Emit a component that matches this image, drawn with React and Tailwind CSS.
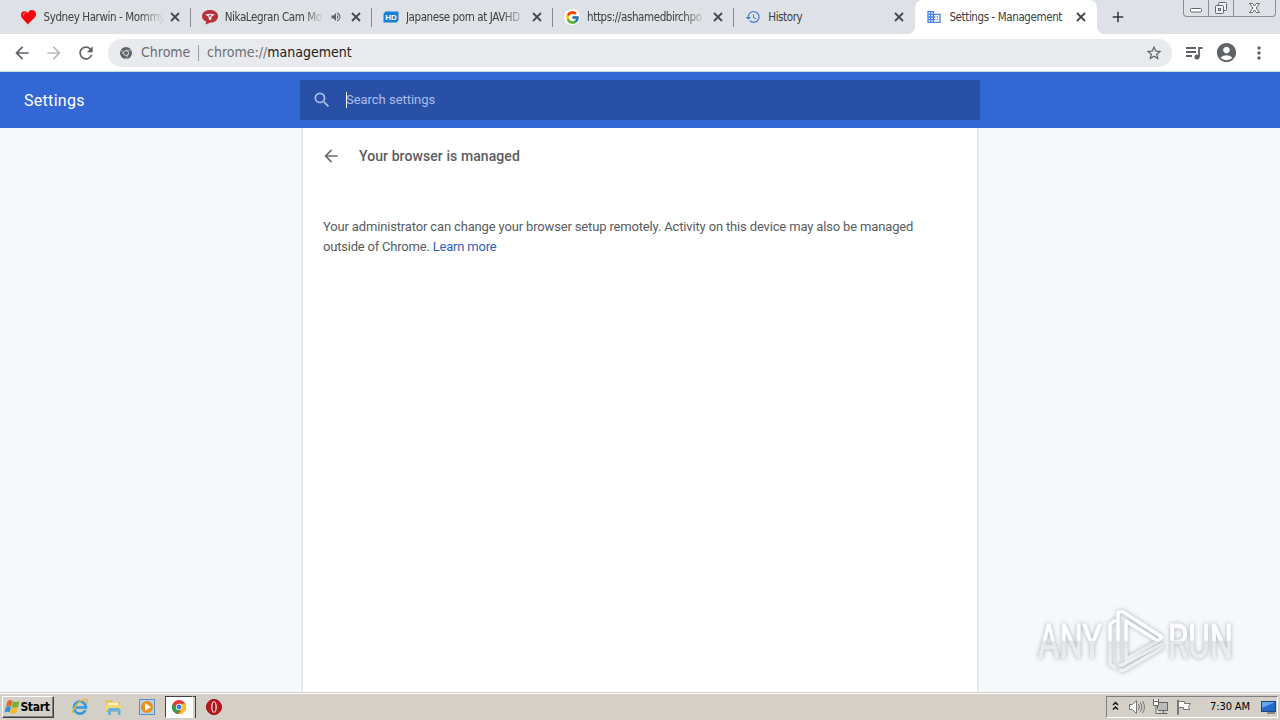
import React from "react";
import { FcGoogle } from "react-icons/fc";
import {
  MdArrowBack,
  MdArrowForward,
  MdRefresh,
  MdStarBorder,
  MdAccountCircle,
  MdMoreVert,
  MdSearch,
  MdHistory,
  MdBusiness,
  MdAdd,
  MdVolumeUp,
} from "react-icons/md";

const HeartIcon = () => (
  <svg width="16" height="16" viewBox="0 0 16 16">
    <path d="M7 15.500 1 9C-1 6 0 2.500 3.200 2.200c1.800-.1 2.900.9 3.600 2C7.500 2.400 9 .8 11.300 1c3.400.3 4.600 3.800 3.200 6.600C13.200 10 9 12.500 7 15.500Z" fill="#f5060c" />
    <path d="M2.600 6.500c-.2-1.800.6-2.700 1.800-2.600" stroke="#ff9a9a" strokeWidth="1" fill="none" />
  </svg>
);

const CamIcon = () => (
  <svg width="16" height="16" viewBox="0 0 16 16">
    <path d="M8 1c4.500 0 8 2.500 8 6.200 0 3.600-3 6.300-7.200 6.300L3.500 15.600l.7-3C1.700 11.500 0 9.700 0 7.200 0 3.500 3.500 1 8 1Z" fill="#b5303a" />
    <path d="M3 5.800c3-1.500 7-1.500 10 0L9.800 7.600 9 11H7L6.300 7.600Z" fill="#f6e3e5" />
    <circle cx="8" cy="6.800" r="1" fill="#b5303a" />
  </svg>
);

const HdIcon = () => (
  <svg width="16" height="16" viewBox="0 0 16 16">
    <path d="M2.500 2.500H15.500V11L13.500 13.500H.5V5Z" fill="#1581d8" />
    <text x="8" y="11" textAnchor="middle" fontSize="8" fontWeight="bold" fontFamily="Liberation Sans, sans-serif" fill="#fff">
      HD
    </text>
  </svg>
);

const GoogleIcon = () => (
  <span className="flex h-4 w-4 items-center justify-center rounded-full bg-white">
    <FcGoogle size={15} />
  </span>
);

const ChromeIcon = ({ gray, size = 14 }) => (
  <svg width={size} height={size} viewBox="0 0 24 24">
    <circle cx="12" cy="12" r="12" fill={gray ? "#5f6368" : "#e33b2e"} />
    {!gray && (
      <>
        <path d="M1.600 6 7.200 15 12 17.500 9.500 23.800A12 12 0 0 1 1.600 6Z" fill="#2ba24c" />
        <path d="M22.500 6.500H12L17.200 14.500 11.300 24A12 12 0 0 0 22.500 6.500Z" fill="#fcc31e" />
      </>
    )}
    {gray && <path d="M12 6.500h10.500M7.200 14.700 1.900 5.700M16.800 14.700 11.500 24" stroke="#e8eaed" strokeWidth="1.200" />}
    <circle cx="12" cy="12" r="5.500" fill="#f4f5f6" />
    <circle cx="12" cy="12" r="4.200" fill={gray ? "#5f6368" : "#3d7de8"} />
  </svg>
);

const tabs = [
  { title: "Sydney Harwin - Mommy", icon: <HeartIcon /> },
  { title: "NikaLegran Cam Mo", icon: <CamIcon />, audio: true },
  { title: "Japanese porn at JAVHD", icon: <HdIcon /> },
  { title: "https://ashamedbirchpo", icon: <GoogleIcon /> },
  { title: "History", icon: <MdHistory size={16} color="#4678cf" /> },
  { title: "Settings - Management", icon: <MdBusiness size={16} color="#4b82e8" />, active: true },
];

const Tab = ({ tab, divider }) => (
  <div
    className={`relative flex h-[34px] w-[181.200px] shrink-0 items-center pl-[11px] ${
      tab.active ? "rounded-t-lg bg-white" : ""
    }`}
  >
    {tab.active && (
      <>
        <span className="absolute bottom-0 -left-2 h-2 w-2 bg-[radial-gradient(circle_at_top_left,transparent_8px,white_8px)]" />
        <span className="absolute -right-2 bottom-0 h-2 w-2 bg-[radial-gradient(circle_at_top_right,transparent_8px,white_8px)]" />
      </>
    )}
    <span className="w-4">{tab.icon}</span>
    <span
      className={`ml-[7px] overflow-hidden text-[11.5px] leading-4 tracking-[-0.4px] whitespace-nowrap text-[#3c4043] ${
        tab.audio ? "w-[99px]" : "w-[120px]"
      } ${tab.active || !divider ? "" : "[mask-image:linear-gradient(to_right,black_80%,transparent)]"}`}
    >
      {tab.title}
    </span>
    {tab.audio && <MdVolumeUp size={12} className="ml-[6px] text-[#5f6368]" />}
    <svg className="mr-[10px] ml-auto" width="10" height="10" viewBox="0 0 10 10" stroke="#45494d" strokeWidth="1.800">
      <path d="m1 1 8 8M9 1 1 9" />
    </svg>
    <span className={divider ? "h-[19px] w-px bg-[#858991]" : "w-px"} />
  </div>
);

const WindowButtons = () => (
  <div className="mr-1 ml-auto flex h-[17px] self-start rounded-b border border-t-0 border-[#8b8e96] text-[#62666e]">
    <span className="flex w-[25px] items-center justify-center border-r border-[#8b8e96]">
      <svg width="14" height="16" viewBox="0 0 14 16" fill="#fff" stroke="currentColor">
        <rect x="1.500" y="8.500" width="11" height="3.500" rx="1" />
      </svg>
    </span>
    <span className="flex w-[25px] items-center justify-center border-r border-[#8b8e96]">
      <svg width="14" height="16" viewBox="0 0 14 16" fill="#eef0f3" stroke="currentColor">
        <rect x="4.500" y="2.500" width="8" height="8" rx="1" />
        <rect x="1.500" y="5.500" width="8" height="8" rx="1" />
        <rect x="4.500" y="8.500" width="2" height="2" />
      </svg>
    </span>
    <span className="flex w-[41px] items-center justify-center">
      <svg width="13" height="16" viewBox="0 0 13 16" fill="#fff" stroke="currentColor">
        <path d="M1.500 3.500h3l2 2.500 2-2.500h3L8.200 8l3.300 4.500h-3l-2-2.500-2 2.500h-3L4.800 8Z" />
      </svg>
    </span>
  </div>
);

const TabStrip = () => (
  <div className="flex h-[34px] items-center bg-[#dee1e6] pl-[9.500px] font-['DejaVu_Sans_Condensed','DejaVu_Sans',sans-serif] [font-stretch:condensed]">
    {tabs.map((tab, index) => (
      <Tab key={tab.title} tab={tab} divider={index < 4} />
    ))}
    <MdAdd size={18} className="ml-[12px] text-[#34383c]" />
    <WindowButtons />
  </div>
);

const Toolbar = () => (
  <div className="flex h-[38px] items-center border-b border-[#c5dfdc] bg-white text-[#5f6368]">
    <MdArrowBack size={20} className="ml-3" />
    <MdArrowForward size={20} className="ml-3 text-[#babcbe]" />
    <MdRefresh size={20} className="ml-3" />
    <div className="ml-3 flex h-7 w-[1064px] items-center rounded-full bg-[#e8eaed] pl-3 font-['DejaVu_Sans_Condensed','DejaVu_Sans',sans-serif] text-[14px] [font-stretch:condensed]">
      <ChromeIcon gray size={12} />
      <span className="ml-[9px] w-[50px] whitespace-nowrap text-[#6b6f74]">Chrome</span>
      <span className="ml-[7px] h-4 w-px bg-[#9a9da1]" />
      <span className="ml-2 whitespace-nowrap text-[#6b6f74]">
        chrome://<span className="text-[#202124]">management</span>
      </span>
      <MdStarBorder size={18} className="mr-[9px] ml-auto" />
    </div>
    <svg className="ml-[13px]" width="18" height="16" viewBox="0 0 18 16" fill="none" stroke="currentColor" strokeWidth="1.800">
      <path d="M1 3h10M1 7h10M1 11h6M14 12V3h3.500" />
      <circle cx="12" cy="12" r="1.600" fill="currentColor" />
    </svg>
    <MdAccountCircle size={23} className="ml-[12px]" />
    <MdMoreVert size={20} className="ml-[11px]" />
  </div>
);

const SettingsHeader = () => (
  <header className="z-10 flex h-14 items-center bg-[#3367d6] font-[Roboto,sans-serif]">
    <h1 className="w-[300px] pt-px pl-6 text-base font-normal tracking-[0.300px] text-white">Settings</h1>
    <div className="flex h-10 w-[680px] items-center bg-[#2850a7] pl-[12px] text-[#a9bfec]">
      <MdSearch size={20} />
      <span className="ml-[14px] h-4 w-px bg-white" />
      <span className="-ml-px text-[13px] tracking-[-0.030px]">Search settings</span>
    </div>
  </header>
);

const ManagementPage = () => (
  <main className="flex min-h-0 flex-1 justify-center bg-[#f5f9fc] font-[Roboto,sans-serif] text-[#5a5c5f]">
    <section className="w-[674px] bg-white px-5 shadow-[0_0_2px_1px_#d5dade]">
      <div className="flex h-14 items-center">
        <MdArrowBack size={20} className="-ml-[2px] text-[#6b6e72]" />
        <h2 className="ml-[18px] text-[14px] font-medium tracking-[0.080px]">Your browser is managed</h2>
      </div>
      <p className="mt-[33px] text-[13px] leading-5 tracking-[-0.205px] whitespace-nowrap">
        <span className="tracking-[-0.155px]">
          Your administrator can change your browser setup remotely. Activity on this device may also be managed
        </span>
        <br />
        outside of Chrome. <a className="text-[#2f62bd]">Learn more</a>
      </p>
    </section>
  </main>
);

const Watermark = () => (
  <svg
    className="absolute top-[605px] left-[1032px] drop-shadow-[0_0_2px_rgba(90,100,110,0.5)]"
    width="210"
    height="72"
    viewBox="0 0 210 72"
  >
    <defs>
      <linearGradient id="markFill" x1="0" y1="18" x2="0" y2="54" gradientUnits="userSpaceOnUse">
        <stop offset="0.48" stopColor="#ffffff" />
        <stop offset="0.5" stopColor="#e3e5e7" />
        <stop offset="1" stopColor="#eeeff0" />
      </linearGradient>
    </defs>
    <g fill="url(#markFill)" stroke="url(#markFill)" fontFamily="Roboto, sans-serif" fontSize="49">
      <text x="6" y="53" textLength="64" lengthAdjust="spacingAndGlyphs">ANY</text>
      <text x="136" y="53" textLength="65" lengthAdjust="spacingAndGlyphs">RUN</text>
    </g>
    <g fill="none" stroke="url(#markFill)" strokeWidth="3.500" strokeLinejoin="round">
      <path d="M84 15 78 19V59l6 4" />
      <path d="M86 56V8q3-3 7 0l37 24-4 4L94 16V54l34-19" />
      <path d="M87 59q2 3 6-1l37-19v4L94 64q-4 3-6 0" />
    </g>
  </svg>
);

const StartButton = () => (
  <button className="ml-[2px] flex h-[22px] w-[52px] items-center border border-t-white border-r-[#404040] border-b-[#404040] border-l-white bg-[#d4d0c8] pl-px text-[12px] font-bold tracking-[-0.300px] text-black shadow-[inset_-1px_-1px_#808080]">
    <svg width="16" height="16" viewBox="0 0 16 16">
      <path d="M3.500 2q3-2 5 0L7.200 7.500q-2-1.500-5.200 0Z" fill="#e7652b" />
      <path d="M9 2.300q2.500 1.500 6.500 0L14 8q-3 1.500-6.300 0Z" fill="#78ae37" />
      <path d="M1.800 8q3-1.500 5.200 0l-1.300 5.500q-2-1.500-5.200 0Z" fill="#388ed0" />
      <path d="M7.500 8.500q3 1.500 6.300 0L12.300 14q-3 1.500-6.200 0Z" fill="#f6bc22" />
    </svg>
    <span className="-ml-px w-8 whitespace-nowrap">Start</span>
  </button>
);

const IeIcon = () => (
  <svg width="18" height="18" viewBox="0 0 18 18" fill="none">
    <path d="M14.500 12A6 6 0 1 1 15 9.500H5" stroke="#329bdc" strokeWidth="2.600" />
    <path d="M2.500 15C-1 15 6 3 13.500 1.500q4-.5 2.500 4" stroke="#e6b536" strokeWidth="1.400" />
  </svg>
);

const FolderIcon = () => (
  <svg width="18" height="18" viewBox="0 0 18 18">
    <path d="M1 2h6l1 2h7v10H1Z" fill="#e3bd58" />
    <path d="M2.500 4.500h11v5h-11Z" fill="#fff3bd" />
    <path d="M1 7h15v5H1Z" fill="#efd77b" />
    <path d="M3 17v-5q0-2 2-2h8q2.500 0 2.500 2v5H13v-3.500H6V17Z" fill="#65b3dc" />
  </svg>
);

const PlayerIcon = () => (
  <svg width="16" height="16" viewBox="0 0 16 16">
    <rect x=".5" y=".5" width="15" height="15" fill="#b4d3ee" stroke="#5e8fbd" />
    <circle cx="8" cy="8" r="6" fill="#ef8c16" />
    <path d="m6 4 6 4-6 4Z" fill="#fff" />
  </svg>
);

const OperaIcon = () => (
  <svg width="16" height="16" viewBox="0 0 16 16">
    <circle cx="8" cy="8" r="7.500" fill="#c01620" stroke="#8a0d13" />
    <ellipse cx="8" cy="8" rx="2.800" ry="5.800" fill="#fbe9e9" />
    <ellipse cx="8" cy="8" rx="1.500" ry="4.800" fill="#a01319" />
  </svg>
);

const Tray = () => (
  <div className="mr-[2px] ml-auto flex h-[22px] w-[172px] items-center border border-t-[#808080] border-r-white border-b-white border-l-[#808080] pl-[5px]">
    <svg className="-mt-[3px] shrink-0" width="7" height="10" viewBox="0 0 7 10" fill="none" stroke="#111" strokeWidth="1.500">
      <path d="m1 4 2.500-2.500L6 4M1 8.500 3.500 6 6 8.500" />
    </svg>
    <svg className="ml-[9px] shrink-0" width="18" height="16" viewBox="0 0 18 16" fill="none" stroke="#777">
      <path d="M1.500 5.500h3l4-4v13l-4-4h-3Z" fill="#fff" />
      <path d="M10.500 5q2 3 0 6M12.500 3.500q3 4.500 0 9M14.500 2q4 6 0 12" />
    </svg>
    <svg className="ml-[6px] shrink-0" width="17" height="16" viewBox="0 0 17 16" fill="#eee" stroke="#666">
      <rect x="5.500" y="3.500" width="10" height="8" fill="#bbb" />
      <path d="M6.500 14.500h9M11.500 12v2" />
      <path d="M1.500 0v4h5V0M4 6v8.500h3" />
      <path d="M1.500 2.500h5v4h-5Z" fill="#fff" />
    </svg>
    <svg className="ml-[7px] shrink-0" width="17" height="16" viewBox="0 0 17 16" fill="#fff" stroke="#777">
      <path d="M1.500 1v14.500h1V1Z" />
      <path d="M2.500 2.500h6v2h6l-2 3 1 3h-6v-2h-5Z" />
    </svg>
    <span className="ml-[17px] w-[42px] text-[11px] tracking-[-0.100px] whitespace-nowrap text-black">7:30 AM</span>
    <svg className="ml-[9px] shrink-0" width="16" height="14" viewBox="0 0 16 14">
      <rect x=".5" y="1.500" width="14" height="10" fill="#2369c9" stroke="#164780" />
      <path d="M1 2h13L1 8Z" fill="#66a7ea" />
      <path d="M6 13h8" stroke="#444" />
    </svg>
  </div>
);

const Taskbar = () => (
  <footer className="flex h-7 items-center border-t border-[#d4d0c8] bg-[#d4d0c8] pt-px font-['DejaVu_Sans_Condensed','DejaVu_Sans',sans-serif] shadow-[inset_0_1px_white] [font-stretch:condensed]">
    <StartButton />
    <div className="ml-[17px] flex items-center">
      <IeIcon />
      <span className="ml-4"><FolderIcon /></span>
      <span className="ml-[16px]"><PlayerIcon /></span>
      <span className="ml-[10px] flex h-[22px] w-7 items-center justify-center border border-t-[#404040] border-r-white border-b-white border-l-[#404040] bg-white">
        <ChromeIcon />
      </span>
      <span className="h-[22px] w-[3px] border-t border-r border-t-[#404040] border-r-[#404040]" />
      <span className="ml-[10px]"><OperaIcon /></span>
    </div>
    <Tray />
  </footer>
);

const App = () => {
  return (
    <div className="relative flex h-[720px] w-[1280px] flex-col overflow-hidden bg-white">
      <TabStrip />
      <Toolbar />
      <SettingsHeader />
      <ManagementPage />
      <Taskbar />
      <Watermark />
    </div>
  );
};

export default App;
